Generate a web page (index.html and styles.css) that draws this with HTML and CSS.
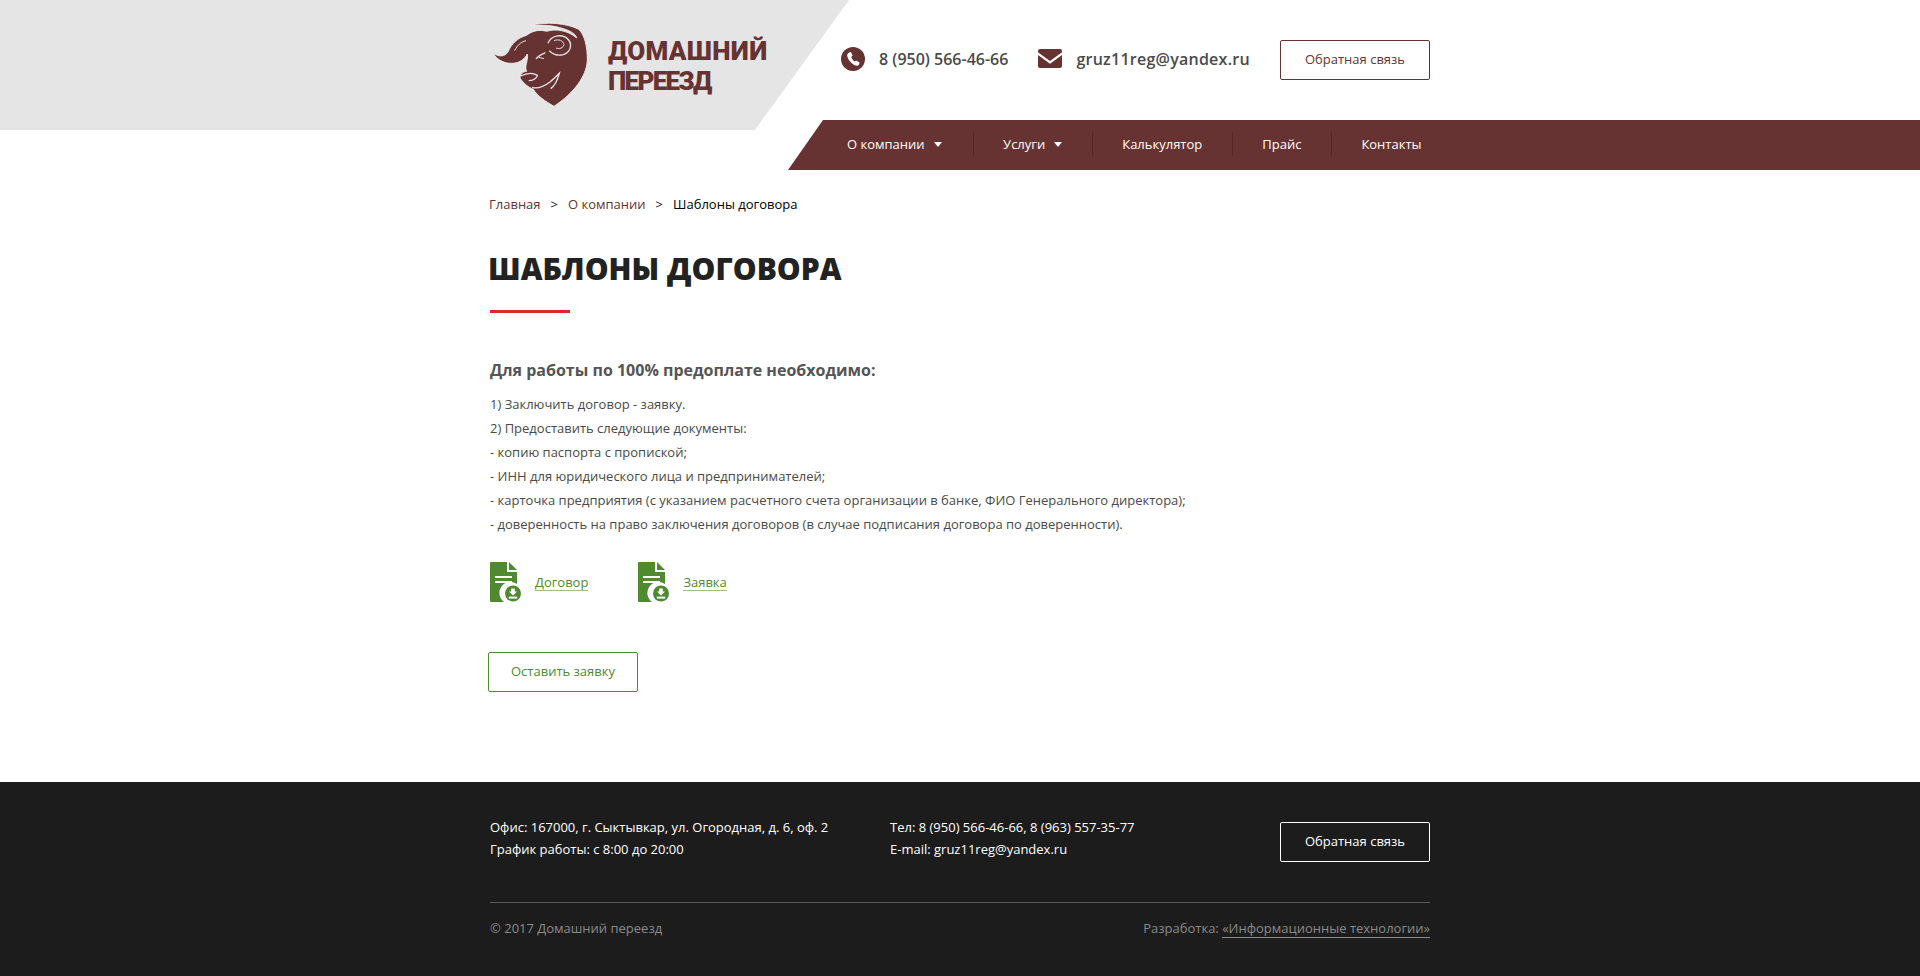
FILE: index.html
```html
<!DOCTYPE html>
<html>
<head>
  <meta charset="utf-8">
  <title>Шаблоны договора</title>
  <link rel="stylesheet" href="styles.css">
</head>
<body>
  <header class="site-header">
    <div class="header-band"></div>
    <div class="container header-top">
      <a class="logo" href="#">
        <svg class="logo-mark" viewBox="30 30 300 270" width="100" height="90">
          <path class="bull" d="M150 46 C200 34 262 40 296 58 C314 74 322 110 322 150 C320 200 280 250 222 289 C196 274 172 258 160 238 C146 232 132 222 120 204 C122 192 126 186 140 184 C132 170 146 150 142 132 C132 150 116 160 94 160 C70 160 50 148 40 130 C58 142 74 140 84 126 C94 102 112 84 140 76 C156 62 180 58 200 64 C226 56 262 60 290 84 C288 72 270 62 250 56 C222 46 186 44 150 46 Z"/>
          <path class="bull-cut" d="M204 100 C214 74 250 70 266 90 C278 106 270 128 250 134 C234 138 218 132 208 122"/>
          <path class="bull-cut thin" d="M222 92 C236 86 250 92 252 104 C250 114 238 118 228 114"/>
          <path class="bull-cut thin" d="M104 122 C112 106 122 96 138 92"/>
          <path class="bull-cut" d="M168 146 C176 138 186 132 196 128"/>
          <path class="bull-cut thin" d="M176 142 L192 146"/>
          <path class="bull-cut" d="M122 198 C138 190 156 186 172 196 C170 206 158 212 146 212"/>
          <path class="bull-cut" d="M156 232 C174 238 194 228 210 216 C220 208 232 196 238 190 C232 212 226 226 212 236"/>
        </svg>
        <span class="logo-text">ДОМАШНИЙ<br><span class="logo-line">ПЕРЕЕЗД</span></span>
      </a>
      <div class="header-contacts">
        <a class="contact" href="#">
          <svg class="contact-icon" viewBox="0 0 24 24" width="24" height="24">
            <circle cx="12" cy="12" r="12" fill="#673232"/>
            <path fill="#fff" d="M8.2 5.4 L10 5 L11.6 8.6 L10.2 10 C10.7 11.6 12.2 13.7 13.8 14.6 L15.2 13.4 L18.6 15.4 L18 17.4 C17.4 18.6 16 19 14.8 18.6 C10.6 17.2 6.8 12.6 6.2 8.8 C6 7.2 7 5.8 8.2 5.4 Z"/>
          </svg>
          <span>8 (950) 566-46-66</span>
        </a>
        <a class="contact contact-mail" href="#">
          <svg class="contact-icon" viewBox="0 0 24 19" width="24" height="19">
            <path fill="#673232" d="M2 0 H22 A2 2 0 0 1 24 2 V3.2 L12 12 L0 3.2 V2 A2 2 0 0 1 2 0 Z"/>
            <path fill="#673232" d="M0 6 L12 14.8 L24 6 V17 A2 2 0 0 1 22 19 H2 A2 2 0 0 1 0 17 Z"/>
          </svg>
          <span>gruz11reg@yandex.ru</span>
        </a>
      </div>
      <a class="btn btn-brown" href="#">Обратная связь</a>
    </div>
    <nav class="main-nav">
      <a class="nav-item has-sub" href="#">О компании</a>
      <a class="nav-item has-sub" href="#">Услуги</a>
      <a class="nav-item" href="#">Калькулятор</a>
      <a class="nav-item" href="#">Прайс</a>
      <a class="nav-item" href="#">Контакты</a>
    </nav>
  </header>

  <main class="container content">
    <div class="breadcrumbs">
      <a href="#">Главная</a>
      <span class="crumb-sep">&gt;</span>
      <a href="#">О компании</a>
      <span class="crumb-sep">&gt;</span>
      <span class="crumb-current">Шаблоны договора</span>
    </div>

    <h1 class="page-title">Шаблоны договора</h1>

    <h3 class="lead">Для работы по 100% предоплате необходимо:</h3>
    <p class="doc-text">
      1) Заключить договор - заявку.<br>
      2) Предоставить следующие документы:<br>
      - копию паспорта с пропиской;<br>
      - ИНН для юридического лица и предпринимателей;<br>
      - карточка предприятия (с указанием расчетного счета организации в банке, ФИО Генерального директора);<br>
      - доверенность на право заключения договоров (в случае подписания договора по доверенности).
    </p>

    <div class="files">
      <a class="file" href="#">
        <svg class="file-icon" viewBox="0 0 32 40" width="32" height="40">
          <use href="#doc-icon"/>
        </svg>
        <span>Договор</span>
      </a>
      <a class="file" href="#">
        <svg class="file-icon" viewBox="0 0 32 40" width="32" height="40">
          <use href="#doc-icon"/>
        </svg>
        <span>Заявка</span>
      </a>
    </div>

    <a class="btn btn-green" href="#">Оставить заявку</a>
  </main>

  <footer class="site-footer">
    <div class="container">
      <div class="footer-top">
        <div class="footer-col footer-address">
          Офис: 167000, г. Сыктывкар, ул. Огородная, д. 6, оф. 2<br>
          График работы: с 8:00 до 20:00
        </div>
        <div class="footer-col">
          Тел: 8 (950) 566-46-66, 8 (963) 557-35-77<br>
          E-mail: gruz11reg@yandex.ru
        </div>
        <a class="btn btn-white" href="#">Обратная связь</a>
      </div>
      <div class="footer-bottom">
        <span>© 2017 Домашний переезд</span>
        <span>Разработка: <a href="#">«Информационные технологии»</a></span>
      </div>
    </div>
  </footer>

  <svg class="sprite" width="0" height="0">
    <symbol id="doc-icon" viewBox="0 0 32 40">
      <path fill="#508a30" d="M1 0 H17 V10 H27 V22 A10.5 10.5 0 0 0 14 40 H1 A1 1 0 0 1 0 39 V1 A1 1 0 0 1 1 0 Z"/>
      <path fill="#508a30" d="M19 0 L27 8 H19 Z"/>
      <rect x="5" y="14" width="17" height="2" fill="#fff"/>
      <rect x="5" y="19" width="17" height="2" fill="#fff"/>
      <circle cx="23" cy="31.5" r="8" fill="#508a30"/>
      <path fill="#fff" d="M21.2 26.5 H24.8 V29.4 H27 L23 33.4 L19 29.4 H21.2 Z"/>
      <rect x="18.8" y="34.6" width="8.4" height="2" fill="#fff"/>
    </symbol>
  </svg>
</body>
</html>
```

FILE: styles.css
```css
body {
  margin: 0;
  background-color: #fff;
  font-family: "Open Sans", sans-serif;
  font-size: 13px;
  color: #4a4a4a;
}

a {
  text-decoration: none;
  color: inherit;
}

.container {
  width: 940px;
  margin: 0 auto;
}

.sprite {
  position: absolute;
}

/* header */
.site-header {
  position: relative;
}

.header-band {
  position: absolute;
  top: 0;
  left: 0;
  width: 849px;
  height: 130px;
  background-color: #e5e5e5;
  clip-path: polygon(0 0, 100% 0, 755px 100%, 0 100%);
}

.header-top {
  position: relative;
  display: flex;
  align-items: center;
  height: 120px;
}

.logo {
  display: flex;
  align-items: center;
  width: 351px;
  height: 120px;
}

.logo-mark {
  flex: none;
  margin: 9px 18px 0 0;
}

.logo-mark .bull {
  fill: #673232;
  stroke: #f4f4f4;
  stroke-width: 2.5;
}

.logo-mark .bull-cut {
  fill: none;
  stroke: #e5e5e5;
  stroke-width: 4;
}

.logo-mark .thin {
  stroke-width: 3;
}

.logo-text {
  font-family: "Roboto", sans-serif;
  font-weight: 900;
  font-size: 26px;
  line-height: 30px;
  letter-spacing: 0.3px;
  color: #673232;
  margin-top: 12px;
}

.logo-line {
  letter-spacing: -1.7px;
}

.header-contacts {
  display: flex;
  align-items: center;
  width: 439px;
  margin-top: -3px;
  font-size: 16px;
  font-weight: 600;
  line-height: 24px;
}

.contact {
  display: flex;
  align-items: center;
  gap: 14px;
}

.contact-mail {
  margin-left: 30px;
}

.contact-mail span {
  letter-spacing: 0.25px;
}

.btn {
  display: flex;
  align-items: center;
  justify-content: center;
  box-sizing: border-box;
  width: 150px;
  height: 40px;
  padding-bottom: 2px;
  border: 1px solid;
  border-radius: 2px;
  font-size: 13px;
}

.btn-brown {
  border-color: #673232;
  color: #673232;
}

.btn-green {
  border-color: #508a30;
  color: #508a30;
  margin-left: -2px;
}

.btn-white {
  border-color: #fff;
  color: #fff;
}

.main-nav {
  display: flex;
  align-items: center;
  box-sizing: border-box;
  height: 50px;
  margin-left: calc(50% - 172px);
  padding: 0 0 2px 29.5px;
  background-color: #673232;
  clip-path: polygon(35px 0, 100% 0, 100% 100%, 0 100%);
  position: relative;
  color: #fff;
}

.nav-item {
  display: flex;
  align-items: center;
  height: 24px;
  padding: 0 29.5px;
  border-left: 1px solid #572525;
}

.nav-item:first-child {
  padding-right: 31px;
  border-left: none;
}

.has-sub::after {
  content: "";
  margin-left: 9px;
  border-left: 4px solid transparent;
  border-right: 4px solid transparent;
  border-top: 5px solid #fff;
}

/* content */
.content {
  padding-bottom: 90px;
}

.breadcrumbs {
  display: flex;
  margin-left: -1px;
  padding-top: 24px;
  line-height: 20px;
  color: #673232;
}

.crumb-sep {
  margin: 0 10px;
  color: #222;
}

.crumb-current {
  color: #000;
}

.page-title {
  margin: 35px 0 0 -2px;
  padding-bottom: 24px;
  font-size: 30px;
  font-weight: 800;
  line-height: 40px;
  text-transform: uppercase;
  color: #222;
  position: relative;
}

.page-title::after {
  content: "";
  position: absolute;
  left: 2px;
  bottom: 0;
  width: 80px;
  height: 3px;
  background-color: #d92b2b;
}

.lead {
  margin: 45px 0 0;
  font-size: 16px;
  font-weight: 700;
  line-height: 24px;
  color: #555;
}

.doc-text {
  margin: 10px 0 0;
  line-height: 24px;
}

.files {
  display: flex;
  gap: 50px;
  margin-top: 26px;
}

.file {
  display: flex;
  align-items: center;
  gap: 13px;
  color: #508a30;
}

.file span {
  border-bottom: 1px solid #9dbd8b;
  line-height: 16px;
}

.file-icon {
  display: block;
}

.content > .btn-green {
  margin-top: 50px;
}

/* footer */
.site-footer {
  background-color: #1c1c1c;
  color: #fff;
  height: 194px;
}

.footer-top {
  display: flex;
  align-items: center;
  height: 120px;
  border-bottom: 1px solid #5a5a5a;
  line-height: 22px;
}

.footer-col {
  flex: 1;
  margin-top: -8px;
}

.footer-address {
  flex: none;
  width: 400px;
}

.footer-bottom {
  display: flex;
  justify-content: space-between;
  padding-top: 15px;
  line-height: 20px;
  color: #8a8a8a;
}

.footer-bottom a {
  border-bottom: 1px solid #8a8a8a;
}
```
